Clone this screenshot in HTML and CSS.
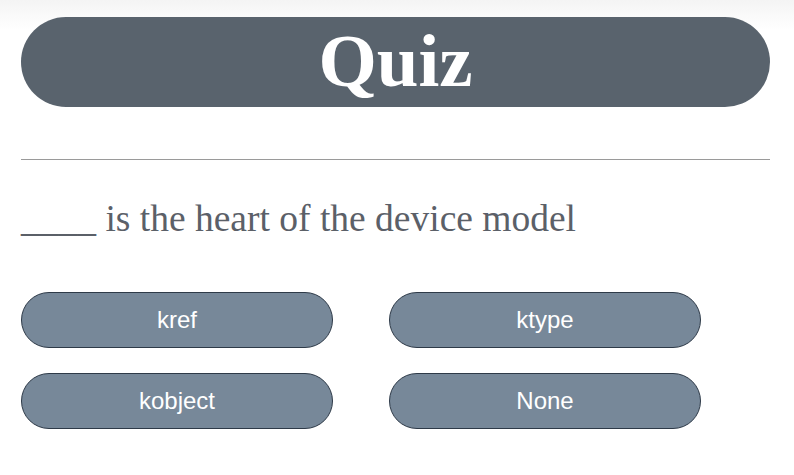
FILE: index.html
```html
<!DOCTYPE html>
<html>
<head>
<meta charset="utf-8">
<link rel="stylesheet" href="styles.css">
</head>
<body>
<div class="page">
  <header class="title-bar"><h1 class="title">Quiz</h1></header>
  <hr class="divider">
  <p class="question">____ is the heart of the device model</p>
  <div class="answers">
    <button class="answer">kref</button>
    <button class="answer">ktype</button>
    <button class="answer">kobject</button>
    <button class="answer">None</button>
  </div>
</div>
</body>
</html>
```

FILE: styles.css
```css
html, body {
  margin: 0;
  padding: 0;
}
body {
  background: linear-gradient(#f4f4f4 0px, #ffffff 30px, #ffffff 100%);
  min-height: 475px;
}
.page {
  width: 749px;
  margin-left: 21px;
  padding-top: 17px;
}
.title-bar {
  height: 90px;
  border-radius: 45px;
  background: #59636d;
  display: flex;
  align-items: center;
  justify-content: center;
}
.title {
  margin: 0;
  font-family: "Liberation Serif", "Times New Roman", serif;
  font-weight: bold;
  font-size: 75px;
  line-height: 1;
  color: #ffffff;
  transform: translateY(-2px);
}
.divider {
  margin: 52px 0 0 0;
  border: none;
  border-top: 1px solid #9a9a9a;
  height: 0;
}
.question {
  margin: 37px 0 0 0;
  font-family: "Liberation Serif", "Times New Roman", serif;
  font-size: 37.5px;
  line-height: 44px;
  color: #5b6068;
}
.answers {
  margin-top: 51px;
  display: grid;
  grid-template-columns: 312px 312px;
  column-gap: 56px;
  row-gap: 25px;
}
.answer {
  height: 56px;
  border-radius: 28px;
  border: 1px solid #2e3a48;
  background: #778899;
  color: #ffffff;
  font-family: "Liberation Sans", Arial, sans-serif;
  font-size: 24px;
  padding: 0;
}
```
